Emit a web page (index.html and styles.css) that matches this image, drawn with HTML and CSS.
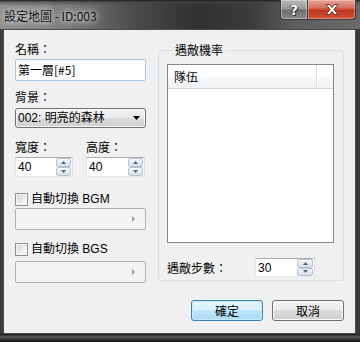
FILE: index.html
```html
<!DOCTYPE html>
<html lang="zh-Hant">
<head>
<meta charset="utf-8">
<title>設定地圖</title>
<link rel="stylesheet" href="styles.css">
</head>
<body>
<div class="window">
  <div class="titlebar">
    <span class="title">設定地圖 - ID:003</span>
    <div class="caption">
      <div class="cbtn help"><span>?</span></div>
      <div class="cbtn close">
        <svg width="14" height="11" viewBox="0 0 14 11"><path d="M1 0.5h3.5L7 3.6 9.5 0.5H13L8.9 5.5 13 10.5H9.5L7 7.4 4.5 10.5H1L5.1 5.5Z" fill="#fff" stroke="#4a1208" stroke-width="0.8" stroke-linejoin="round"/></svg>
      </div>
    </div>
  </div>
  <div class="client">
    <div class="main">
      <div class="left">
        <div class="label first">名稱：</div>
        <div class="textbox focused">第一層[#5]</div>
        <div class="label gap9">背景：</div>
        <div class="dropdown">
          <span>002: 明亮的森林</span>
          <svg class="down" width="7" height="4" viewBox="0 0 7 4"><path d="M0 0h7L3.5 4Z" fill="#000"/></svg>
        </div>
        <div class="dims">
          <div class="dim w1">
            <div class="label">寬度：</div>
            <div class="spin">
              <span class="val">40</span>
              <div class="spinbtns">
                <div class="sb"><svg width="5" height="3" viewBox="0 0 5 3"><path d="M0 3h5L2.5 0Z" fill="#4d6185"/></svg></div>
                <div class="sb"><svg width="5" height="3" viewBox="0 0 5 3"><path d="M0 0h5L2.5 3Z" fill="#4d6185"/></svg></div>
              </div>
            </div>
          </div>
          <div class="dim w2">
            <div class="label">高度：</div>
            <div class="spin">
              <span class="val">40</span>
              <div class="spinbtns">
                <div class="sb"><svg width="5" height="3" viewBox="0 0 5 3"><path d="M0 3h5L2.5 0Z" fill="#4d6185"/></svg></div>
                <div class="sb"><svg width="5" height="3" viewBox="0 0 5 3"><path d="M0 0h5L2.5 3Z" fill="#4d6185"/></svg></div>
              </div>
            </div>
          </div>
        </div>
        <div class="check c1"><span class="box"></span><span>自動切換 BGM</span></div>
        <div class="combo k1"><svg width="3" height="6" viewBox="0 0 3 6"><path d="M0 0L3 3 0 6Z" fill="#9a9a9a"/></svg></div>
        <div class="check c2"><span class="box"></span><span>自動切換 BGS</span></div>
        <div class="combo k2"><svg width="3" height="6" viewBox="0 0 3 6"><path d="M0 0L3 3 0 6Z" fill="#9a9a9a"/></svg></div>
      </div>
      <fieldset class="group">
        <legend>遇敵機率</legend>
        <div class="listview">
          <div class="lvhead">
            <div class="col c-main">隊伍</div>
            <div class="col c-rest"></div>
          </div>
        </div>
        <div class="steps">
          <span class="steplabel">遇敵步數：</span>
          <div class="spin s3">
            <span class="val">30</span>
            <div class="spinbtns">
              <div class="sb"><svg width="5" height="3" viewBox="0 0 5 3"><path d="M0 3h5L2.5 0Z" fill="#4d6185"/></svg></div>
              <div class="sb"><svg width="5" height="3" viewBox="0 0 5 3"><path d="M0 0h5L2.5 3Z" fill="#4d6185"/></svg></div>
            </div>
          </div>
        </div>
      </fieldset>
    </div>
    <div class="buttons">
      <div class="btn default">確定</div>
      <div class="btn">取消</div>
    </div>
  </div>
</div>
</body>
</html>
```

FILE: styles.css
```css
* { box-sizing: border-box; margin: 0; padding: 0; }
html, body { width: 360px; height: 342px; overflow: hidden; }
body {
  font-family: "Liberation Sans", "Noto Sans CJK TC", sans-serif;
  font-size: 12px;
  color: #000;
  background: #222;
}
.window {
  width: 360px;
  height: 342px;
  display: flex;
  flex-direction: column;
  background:
    linear-gradient(180deg, rgba(0,0,0,0) 0px, rgba(0,0,0,0) 334px, #1a1a1a 334px, #5a5a5a 337px, #2a2a2a 340px, #111 342px),
    linear-gradient(90deg, #3c3c3c 0%, #2e2e2e 50%, #3a3a3a 100%);
}
.titlebar {
  height: 29px;
  display: flex;
  align-items: flex-start;
  background:
    linear-gradient(180deg, #1c1c1c 0px, rgba(70,70,70,0.6) 2px, rgba(0,0,0,0) 6px),
    linear-gradient(90deg, #8e8e8e 0%, #7a7a7a 18%, #4a4a4a 38%, #303030 55%, #3c3c3c 70%, #5e5e5e 82%, #6a6a6a 100%);
}
.title {
  margin: 9px 0 0 4px;
  font-family: "Noto Sans CJK TC", "Liberation Sans", sans-serif;
  font-size: 12px;
  line-height: 13px;
  color: #111;
  text-shadow: 0 0 4px #d8d8d8, 0 0 8px #cfcfcf, 0 0 12px #bdbdbd;
}
.caption {
  margin-left: auto;
  margin-right: 4px;
  display: flex;
  height: 20px;
}
.cbtn {
  height: 20px;
  display: flex;
  align-items: center;
  justify-content: center;
  border: 1px solid #3a3a3a;
  border-top: none;
}
.help {
  width: 28px;
  border-radius: 0 0 0 4px;
  background: linear-gradient(180deg, #b8b8b8 0%, #9a9a9a 45%, #6e6e6e 55%, #8a8a8a 100%);
  box-shadow: inset 0 0 0 1px rgba(255,255,255,0.35);
}
.help span {
  font-family: "DejaVu Sans", sans-serif;
  font-weight: bold;
  font-size: 14px;
  line-height: 14px;
  color: #fff;
  text-shadow: 0 0 1px #222, 1px 1px 0 #333, -1px 0 0 #333;
}
.close {
  width: 48px;
  border-left: none;
  border-radius: 0 0 4px 0;
  background: linear-gradient(180deg, #e6a597 0%, #d5705f 40%, #c0391f 55%, #d0533a 100%);
  box-shadow: inset 0 0 0 1px rgba(255,220,210,0.4);
}
.client {
  margin: 0 4px 0 3px;
  height: 305px;
  border: 1px solid #4a4a4a;
  background: #f0f0f0;
  padding: 0 11px;
}
.main {
  display: flex;
  gap: 12px;
}
.left {
  width: 131px;
  display: flex;
  flex-direction: column;
}
.label {
  font-family: "Noto Sans CJK TC", sans-serif;
  line-height: 14px;
  height: 14px;
}
.label.first { margin-top: 12px; }
.label.gap9 { margin-top: 9px; }
.textbox {
  margin-top: 3px;
  height: 22px;
  background: #fff;
  border: 1px solid #abadb3;
  border-radius: 2px;
  padding-left: 2px;
  line-height: 20px;
  font-family: "Noto Sans CJK TC", sans-serif;
}
.textbox.focused { border-color: #a7c6e3; }
.dropdown {
  margin-top: 4px;
  height: 20px;
  border: 1px solid #707070;
  border-radius: 3px;
  background: linear-gradient(180deg, #f2f2f2 0%, #ebebeb 50%, #dddddd 50%, #cfcfcf 100%);
  box-shadow: inset 0 0 0 1px #fafafa;
  display: flex;
  align-items: center;
  padding: 0 5px 0 2px;
  justify-content: space-between;
}
.dropdown span { line-height: 18px; }
.dims {
  display: flex;
  margin-top: 12px;
}
.dim.w1 { width: 58px; margin-right: 13px; }
.dim.w2 { width: 59px; }
.spin {
  margin-top: 3px;
  height: 20px;
  background: #fff;
  border: 1px solid #abadb3;
  border-color: #abadb3 #dbdfe6 #e3e9ef #e2e3ea;
  display: flex;
  align-items: center;
  justify-content: space-between;
  padding: 0 1px 0 2px;
}
.val { line-height: 18px; }
.spinbtns {
  width: 15px;
  height: 18px;
  display: flex;
  flex-direction: column;
}
.sb {
  flex: 1;
  border: 1px solid #b6c3d3;
  border-radius: 2px;
  background: linear-gradient(180deg, #f6f8fb 0%, #e6ecf3 50%, #d5dde8 100%);
  display: flex;
  align-items: center;
  justify-content: center;
}
.check {
  display: flex;
  align-items: center;
  gap: 3px;
  height: 13px;
  line-height: 13px;
}
.check.c1 { margin-top: 16px; }
.check.c2 { margin-top: 13px; }
.box {
  width: 13px;
  height: 13px;
  border: 1px solid #8e8f8f;
  background: linear-gradient(135deg, #d4d4d4 0%, #eeeeee 60%, #fbfbfb 100%);
  box-shadow: inset 0 0 0 1px #f4f4f4;
}
.combo {
  height: 22px;
  border: 1px solid #adb2b5;
  border-radius: 2px;
  background: #f4f4f4;
  display: flex;
  align-items: center;
  justify-content: flex-end;
  padding-right: 10px;
}
.combo.k1 { margin-top: 2px; }
.combo.k2 { margin-top: 5px; }
.group {
  width: 186px;
  margin-top: 13px;
  height: 238px;
  border: 1px solid #d5dfe5;
  border-radius: 3px;
  padding: 0 9px 0 8px;
  display: flex;
  flex-direction: column;
}
.group legend {
  margin-left: 6px;
  padding: 0 2px;
  line-height: 14px;
  font-family: "Noto Sans CJK TC", sans-serif;
}
.listview {
  margin-top: 7px;
  height: 179px;
  border: 1px solid #828790;
  background: #fff;
}
.lvhead {
  height: 24px;
  display: flex;
  background: linear-gradient(180deg, #ffffff 0%, #ffffff 50%, #f7f8fa 51%, #f1f2f4 100%);
  border-bottom: 1px solid #d5d5d5;
}
.col {
  line-height: 23px;
  font-family: "Noto Sans CJK TC", sans-serif;
}
.c-main {
  width: 149px;
  padding-left: 6px;
  border-right: 1px solid #dcdee2;
  box-shadow: 1px 0 0 #fff;
}
.c-rest { flex: 1; }
.steps {
  margin-top: 15px;
  display: flex;
  align-items: center;
}
.steplabel {
  width: 88px;
  font-family: "Noto Sans CJK TC", sans-serif;
  line-height: 14px;
}
.spin.s3 {
  margin-top: 0;
  width: 60px;
  height: 19px;
  padding-right: 1px;
}
.spin.s3 .spinbtns { width: 16px; height: 17px; }
.buttons {
  display: flex;
  justify-content: flex-end;
  gap: 9px;
  margin-top: 17px;
}
.btn {
  width: 72px;
  height: 21px;
  border: 1px solid #707070;
  border-radius: 3px;
  background: linear-gradient(180deg, #f2f2f2 0%, #ebebeb 50%, #dddddd 50%, #cfcfcf 100%);
  box-shadow: inset 0 0 0 1px #fcfcfc;
  display: flex;
  align-items: center;
  justify-content: center;
  font-family: "Noto Sans CJK TC", sans-serif;
  line-height: 19px;
}
.btn.default {
  border-color: #3c7fb1;
  background: linear-gradient(180deg, #eaf6fd 0%, #d9f0fc 50%, #bee6fd 50%, #a7d9f5 100%);
  box-shadow: inset 0 0 0 1px #c8ecff;
}
```
